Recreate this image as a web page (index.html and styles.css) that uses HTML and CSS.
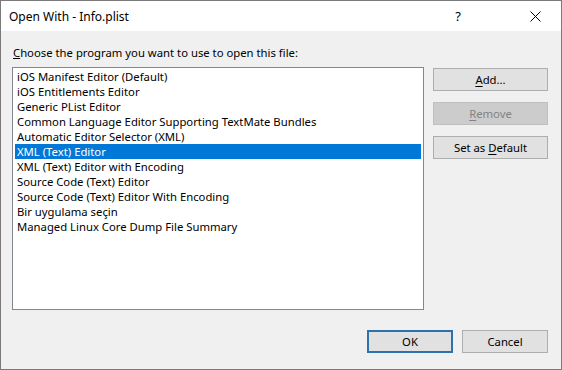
FILE: index.html
```html
<!DOCTYPE html>
<html lang="en">
<head>
    <meta charset="UTF-8">
    <title>Open With - Info.plist</title>
    <link rel="stylesheet" href="styles.css">
</head>
<body>
    <div class="window">
        <header class="titlebar">
            <span class="title">Open With - Info.plist</span>
            <span class="help">?</span>
            <span class="close">
                <svg width="11" height="11" viewBox="0 0 11 11">
                    <path d="M0.5 0.5 L10.5 10.5 M10.5 0.5 L0.5 10.5" stroke="#000" stroke-width="1" fill="none"/>
                </svg>
            </span>
        </header>

        <main class="content">
            <p class="prompt"><u>C</u>hoose the program you want to use to open this file:</p>

            <div class="row">
                <ul class="programs">
                    <li>iOS Manifest Editor (Default)</li>
                    <li>iOS Entitlements Editor</li>
                    <li>Generic PList Editor</li>
                    <li>Common Language Editor Supporting TextMate Bundles</li>
                    <li>Automatic Editor Selector (XML)</li>
                    <li class="selected">XML (Text) Editor</li>
                    <li>XML (Text) Editor with Encoding</li>
                    <li>Source Code (Text) Editor</li>
                    <li>Source Code (Text) Editor With Encoding</li>
                    <li>Bir uygulama seçin</li>
                    <li>Managed Linux Core Dump File Summary</li>
                </ul>

                <div class="side">
                    <button class="btn"><u>A</u>dd...</button>
                    <button class="btn" disabled><u>R</u>emove</button>
                    <button class="btn">Set as <u>D</u>efault</button>
                </div>
            </div>
        </main>

        <footer class="actions">
            <button class="btn small default">OK</button>
            <button class="btn small">Cancel</button>
        </footer>
    </div>
</body>
</html>
```

FILE: styles.css
```css
* {
    box-sizing: border-box;
}

body {
    margin: 0;
    font-family: "Noto Sans", "Open Sans", sans-serif;
    font-size: 11.3px;
    color: #000;
    background: #fff;
}

.window {
    width: 562px;
    height: 370px;
    display: flex;
    flex-direction: column;
    border: 1px solid #7a7a7a;
    background: #f0f0f0;
}

.titlebar {
    height: 30px;
    flex-shrink: 0;
    display: flex;
    align-items: center;
    background: #fff;
    padding-left: 8px;
    font-size: 12px;

    .title {
        flex-grow: 1;
    }

    .help {
        width: 46px;
        text-align: center;
        font-size: 13px;
        margin-right: 31px;
    }

    .close {
        width: 46px;
        margin-right: 3px;
        display: flex;
        justify-content: center;
    }
}

.content {
    padding: 13px 12px 0 11px;
    flex-grow: 1;
}

.prompt {
    margin: 0 0 6px 1px;
    line-height: 16px;
    padding-top: 1px;
}

.row {
    display: flex;
    gap: 9px;
}

.programs {
    list-style: none;
    margin: 0;
    padding: 1px 2px;
    width: 412px;
    height: 243px;
    background: #fff;
    border: 1px solid #828790;

    li {
        height: 15px;
        line-height: 16px;
        padding-left: 2px;
        white-space: nowrap;
    }

    .selected {
        background: #0078d7;
        color: #fff;
    }
}

.side {
    display: flex;
    flex-direction: column;
    gap: 11px;
    padding-top: 1px;
}

.btn {
    width: 115px;
    height: 23px;
    padding: 0;
    font: inherit;
    color: #000;
    background: #e1e1e1;
    border: 1px solid #adadad;

    &[disabled] {
        color: #838383;
        background: #cccccc;
        border-color: #bfbfbf;
    }

    u {
        text-underline-offset: 2px;
    }
}

.actions {
    display: flex;
    justify-content: flex-end;
    gap: 9px;
    padding: 0 13px 16px 0;

    .small {
        width: 86px;
    }

    .default {
        border: 2px solid #2e72ad;
        background: #e1e1e1;
    }
}
```
